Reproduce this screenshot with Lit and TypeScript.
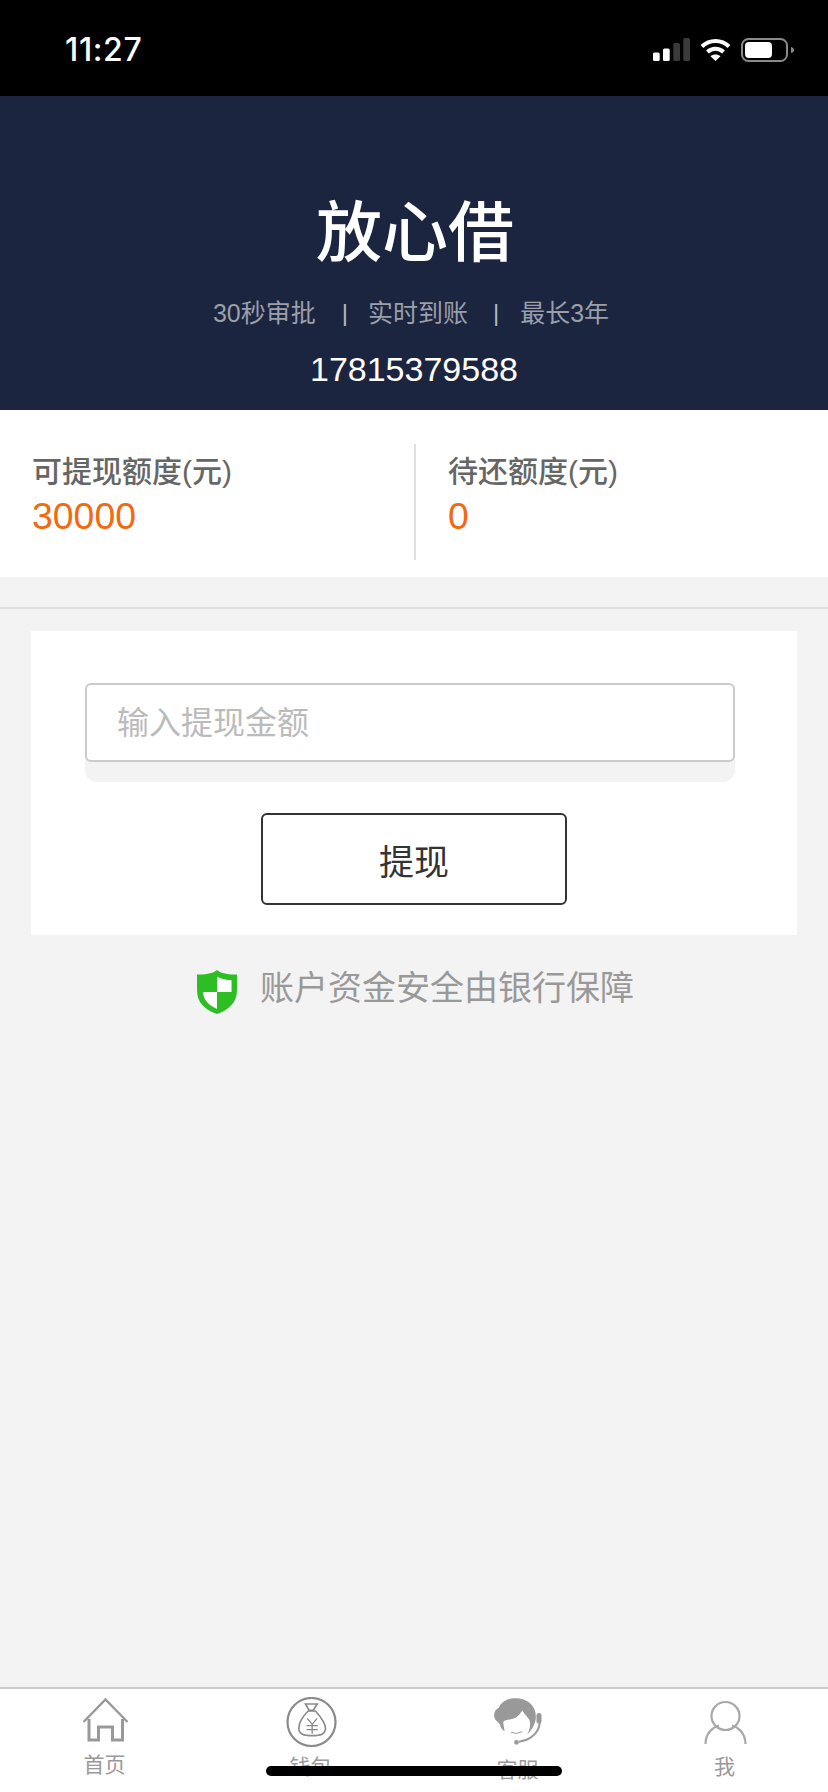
import { LitElement, html, css, svg } from "lit";
import { customElement } from "lit/decorators.js";

const homeIcon = svg`
  <path class="ln" d="M7.5 25 29.5 2.5 51.5 25" />
  <path class="ln w3" d="M13 22V43H22.5V30H36.5V43H46.5V22" />`;
const walletIcon = svg`
  <circle cx="28.5" cy="25" r="24" fill="none" stroke="#8a8a8a" stroke-width="2.2" />
  <g transform="translate(-12.5,-12) scale(.3333)" fill="none" stroke="#8a8a8a">
    <path stroke-width="5" d="M105 57H140L128 76H116Z" />
    <path stroke-width="5" d="M113 78C96 95 85 115 85 130C85 148 100 152 125 152C150 152 165 148 165 130C165 115 150 95 135 78Z" />
    <path stroke-width="4" d="M110 100 125 118 140 100M108 122H142M108 134H142M125 118V146" />
  </g>`;
const agentIcon = svg`
  <g transform="translate(-9.5,-12) scale(.3333)">
    <path fill="#999" d="M105 40C85 38 62 50 55 68C45 72 38 85 42 98C45 108 55 112 58 118C60 128 65 135 72 138L68 112C72 103 90 105 105 98C115 93 122 82 126 76C130 88 145 98 148 108C150 120 148 135 140 148C155 135 165 115 166 98C168 62 140 40 105 40Z" />
    <rect x="168" y="84" width="15" height="32" rx="7" fill="#999" />
    <path fill="none" stroke="#999" stroke-width="6" d="M178 112C175 145 150 165 115 170" />
    <circle cx="108" cy="172" r="7" fill="#999" />
    <path fill="none" stroke="#999" stroke-width="3" d="M92 142Q108 150 125 140" />
  </g>`;
const meIcon = svg`
  <circle cx="28.5" cy="19" r="14" fill="none" stroke="#a8a8a8" stroke-width="2.2" />
  <path fill="none" stroke="#a8a8a8" stroke-width="2.2" d="M8.5 47C8.5 36 16 30 22 28.5M48.5 47C48.5 36 41 30 35 28.5" />`;

const tabs = [
  { label: "首页", icon: homeIcon, cls: "t-home" },
  { label: "钱包", icon: walletIcon, cls: "t-wallet" },
  { label: "客服", icon: agentIcon, cls: "t-agent" },
  { label: "我", icon: meIcon, cls: "t-me" },
];

@customElement("app-root")
export class AppRoot extends LitElement {
  static styles = css`
    :host {
      display: block;
      position: relative;
      width: 828px;
      height: 1792px;
      overflow: hidden;
      background: #f3f3f3;
      font-family: "Liberation Sans", "Noto Sans CJK SC", sans-serif;
    }
    .page {
      display: flex;
      flex-direction: column;
      height: 100%;
    }
    .status {
      height: 93px;
      padding: 3px 34px 0 65px;
      background: #000;
      display: flex;
      align-items: center;
      justify-content: space-between;
      flex: none;
    }
    .time {
      color: #fff;
      font: 500 32px/36px Inter, "Liberation Sans", sans-serif;
      letter-spacing: 0.6px;
    }
    .sys {
      display: flex;
      align-items: center;
      gap: 10px;
    }
    .sys svg {
      display: block;
    }
    .hero {
      height: 223px;
      padding-top: 91px;
      background: #1c2540;
      display: flex;
      flex-direction: column;
      align-items: center;
      flex: none;
    }
    .title {
      margin-left: 2px;
      color: #fff;
      font: 500 66px/80px "Noto Sans CJK SC", sans-serif;
    }
    .perks {
      margin: 31px 6px 0 0;
      display: flex;
      color: #9b9fa9;
      font-size: 25px;
      line-height: 30px;
    }
    .sep {
      font-size: 24px;
      color: #b4b7bf;
    }
    .sep-a {
      margin: 0 20px 0 26px;
    }
    .sep-b {
      margin: 0 21px 0 25px;
    }
    .phone {
      margin-top: 21px;
      color: #fff;
      font-size: 34px;
      line-height: 40px;
    }
    .stats {
      height: 133px;
      padding-top: 34px;
      background: #fff;
      display: grid;
      grid-template-columns: 414px 1fr;
      flex: none;
    }
    .stat {
      height: 116px;
      box-sizing: border-box;
      padding: 8px 0 0 32px;
    }
    .stat + .stat {
      border-left: 2px solid #e0e0e0;
    }
    .stat-label {
      color: #666;
      font: 500 30px/40px "Liberation Sans", "Noto Sans CJK SC", sans-serif;
    }
    .stat-value {
      margin-top: 2px;
      color: #f26a10;
      font-size: 37.4px;
      line-height: 44px;
    }
    .rule {
      height: 2px;
      margin-top: 30px;
      background: #e0e0e0;
      flex: none;
    }
    .card {
      margin: 22px 31px 0;
      height: 252px;
      padding: 52px 62px 0 54px;
      background: #fff;
      display: flex;
      flex-direction: column;
      flex: none;
    }
    .field {
      height: 99px;
      border-radius: 12px;
      background: #f3f3f3;
    }
    .field input {
      display: block;
      box-sizing: border-box;
      width: 100%;
      height: 79px;
      padding: 2px 30px 0;
      border: 2px solid #cbcbcb;
      border-radius: 6px;
      outline: none;
      background: #fff;
      font: 32px "Liberation Sans", "Noto Sans CJK SC", sans-serif;
    }
    .field input::placeholder {
      color: #bbb;
      opacity: 1;
    }
    .submit {
      box-sizing: border-box;
      align-self: center;
      margin: 31px 0 0 8px;
      width: 306px;
      height: 92px;
      border: 2px solid #333;
      border-radius: 6px;
      background: #fff;
      color: #333;
      font: 35px "Liberation Sans", "Noto Sans CJK SC", sans-serif;
    }
    .note {
      margin: 35px 0 0 3px;
      display: flex;
      justify-content: center;
      gap: 23px;
      color: #999;
      font-size: 34px;
      line-height: 36px;
      flex: none;
    }
    .note svg {
      display: block;
      flex: none;
    }
    .tabs {
      margin-top: auto;
      height: 103px;
      border-top: 2px solid #cbcbcb;
      background: #fff;
      display: grid;
      grid-template-columns: repeat(4, 1fr);
      flex: none;
    }
    .tab {
      padding-top: 8px;
      display: flex;
      flex-direction: column;
      align-items: center;
      color: #999;
      font-size: 21px;
      line-height: 24px;
    }
    .tab svg {
      display: block;
    }
    .ln {
      fill: none;
      stroke: #999;
      stroke-width: 2.4;
    }
    .w3 {
      stroke-width: 3;
    }
    .t-home span {
      margin: 2px 0 0 2px;
    }
    .t-wallet span {
      margin-top: 4px;
    }
    .t-agent span {
      margin-top: 7px;
    }
    .t-me span {
      margin-top: 4px;
    }
    .home-bar {
      position: absolute;
      left: 266px;
      top: 1766px;
      width: 296px;
      height: 10px;
      border-radius: 5px;
      background: #000;
    }
  `;

  render() {
    return html`
      <div class="page">
        <div class="status">
          <span class="time">11:27</span>
          <div class="sys">
            <svg width="37" height="23" viewBox="0 0 37 23">
              <rect x="0" y="14.5" width="6.7" height="8.5" rx="1.5" fill="#fff" />
              <rect x="10" y="10.5" width="6.7" height="12.5" rx="1.5" fill="#fff" />
              <rect x="20.3" y="5" width="6.7" height="18" rx="1.5" fill="#3a3a3a" />
              <rect x="30.3" y="0" width="6.7" height="23" rx="1.5" fill="#3a3a3a" />
            </svg>
            <svg width="31" height="23" viewBox="0 0 31 23">
              <path d="M2 8.5C9.5 1 21.5 1 29 8.5" fill="none" stroke="#fff" stroke-width="4" />
              <path d="M7.5 14C12 9.8 19 9.8 23.5 14" fill="none" stroke="#fff" stroke-width="4" />
              <path d="M10.5 18.2C13.2 15.8 17.8 15.8 20.5 18.2L15.5 23Z" fill="#fff" />
            </svg>
            <svg width="53" height="24" viewBox="0 0 53 24">
              <rect x="1" y="1" width="45" height="22" rx="6.5" fill="none" stroke="#8a8a8a" stroke-width="2" />
              <rect x="4" y="4" width="27" height="16" rx="4" fill="#fff" />
              <path d="M50 9C52 9.5 53 10.5 53 12S52 14.500 50 15Z" fill="#8a8a8a" />
            </svg>
          </div>
        </div>

        <div class="hero">
          <div class="title">放心借</div>
          <div class="perks">
            <span>30秒审批</span><span class="sep sep-a">|</span><span>实时到账</span><span class="sep sep-b">|</span><span>最长3年</span>
          </div>
          <div class="phone">17815379588</div>
        </div>

        <div class="stats">
          <div class="stat">
            <div class="stat-label">可提现额度(元)</div>
            <div class="stat-value">30000</div>
          </div>
          <div class="stat">
            <div class="stat-label">待还额度(元)</div>
            <div class="stat-value">0</div>
          </div>
        </div>

        <div class="rule"></div>

        <div class="card">
          <div class="field"><input type="text" placeholder="输入提现金额" /></div>
          <button class="submit">提现</button>
        </div>

        <div class="note">
          <svg width="40" height="44" viewBox="0 0 118 130">
            <path fill="#2dbe23" d="M59 0C70 10 90 14 118 13V60C118 95 95 118 59 130C22 118 0 95 0 60V13C28 14 48 10 59 0Z" />
            <path fill="#fff" d="M59 20C72 26 88 30 102 30V65H59Z" />
            <path fill="#fff" d="M17 65H59V115C35 105 20 90 17 65Z" />
          </svg>
          <span>账户资金安全由银行保障</span>
        </div>

        <div class="tabs">
          ${tabs.map(
            (t) => html`
              <div class="tab ${t.cls}">
                <svg width="56" height="54" viewBox="0 0 56 54">${t.icon}</svg>
                <span>${t.label}</span>
              </div>
            `
          )}
        </div>
      </div>
      <div class="home-bar"></div>
    `;
  }
}
